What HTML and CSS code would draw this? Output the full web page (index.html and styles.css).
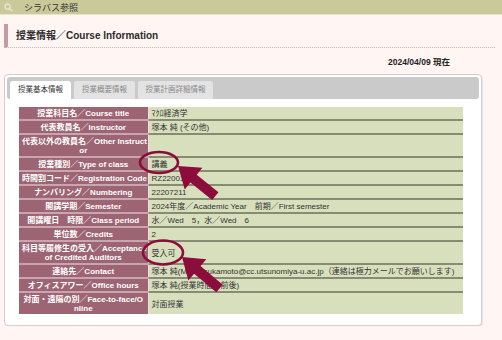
FILE: index.html
```html
<!DOCTYPE html>
<html lang="ja">
<head>
<meta charset="UTF-8">
<meta name="viewport" content="width=device-width, initial-scale=1.0">
<title>シラバス参照</title>
<link rel="stylesheet" href="styles.css">
</head>
<body>
    <div class="topbar">
        <svg class="search-icon" width="9" height="9" viewBox="0 0 9 9">
            <circle cx="3.6" cy="3.6" r="2.6" fill="none" stroke="#e6e6da" stroke-width="1.3"/>
            <line x1="5.5" y1="5.5" x2="8.3" y2="8.3" stroke="#e6e6da" stroke-width="1.6"/>
        </svg>
        <span>シラバス参照</span>
    </div>

    <h2 class="section-title">授業情報／Course Information</h2>
    <div class="as-of">2024/04/09 現在</div>

    <div class="panel">
        <ul class="tabs">
            <li class="tab active">授業基本情報</li>
            <li class="tab">授業概要情報</li>
            <li class="tab wide">授業計画詳細情報</li>
        </ul>
        <table class="info">
            <colgroup><col class="col-head"><col></colgroup>
            <tr><th>授業科目名／Course title</th><td>ﾏｸﾛ経済学</td></tr>
            <tr><th>代表教員名／Instructor</th><td>塚本 純 (その他)</td></tr>
            <tr><th>代表以外の教員名／Other Instruct<br>or</th><td></td></tr>
            <tr><th>授業種別／Type of class</th><td>講義</td></tr>
            <tr><th>時間割コード／Registration Code</th><td>RZ220031</td></tr>
            <tr><th>ナンバリング／Numbering</th><td>22207211</td></tr>
            <tr><th>開講学期／Semester</th><td>2024年度／Academic Year　前期／First semester</td></tr>
            <tr><th>開講曜日　時限／Class period</th><td>水／Wed　5，水／Wed　6</td></tr>
            <tr><th>単位数／Credits</th><td>2</td></tr>
            <tr><th>科目等履修生の受入／Acceptance<br>of Credited Auditors</th><td>受入可</td></tr>
            <tr><th>連絡先／Contact</th><td>塚本 純(Mail: jtsukamoto@cc.utsunomiya-u.ac.jp（連絡は極力メールでお願いします)</td></tr>
            <tr><th>オフィスアワー／Office hours</th><td>塚本 純(授業時間の前後)</td></tr>
            <tr><th>対面・遠隔の別／Face-to-face/O<br>nline</th><td>対面授業</td></tr>
        </table>
    </div>

    <!-- annotation marks drawn over the page -->
    <svg class="marks" width="502" height="340" viewBox="0 0 502 340">
        <ellipse cx="159" cy="162.5" rx="19" ry="10.5" fill="none" stroke="#8c0c3c" stroke-width="2.6"/>
        <polygon points="0,0 20,-14 20,-5 48,-5 48,5 20,5 20,14" fill="#8c0c3c" transform="translate(178 166) rotate(39)"/>
        <ellipse cx="163" cy="252.5" rx="20" ry="12" fill="none" stroke="#8c0c3c" stroke-width="2.6"/>
        <polygon points="0,0 20,-14 20,-5 49,-5 49,5 20,5 20,14" fill="#8c0c3c" transform="translate(182 257) rotate(40)"/>
    </svg>
</body>
</html>
```

FILE: styles.css
```css
body {
    margin: 0;
    background-color: #fff5f3;
    font-family: "Liberation Sans", "Noto Sans CJK JP", sans-serif;
    color: #333;
    position: relative;
}

.topbar {
    display: flex;
    align-items: center;
    height: 14px;
    background-color: #c9c99a;
    border-bottom: 1px solid #e6e6c8;
    font-size: 9px;
    color: #333;
}

.search-icon {
    margin: 0 11px 0 4px;
}

.section-title {
    margin: 9px 7px 0 4px;
    padding-left: 8px;
    height: 23px;
    line-height: 23px;
    font-size: 10px;
    font-weight: bold;
    color: #2c2c2c;
    border-left: 4px solid #c49aa8;
    border-bottom: 1px dotted #bdbdbd;
}

.as-of {
    margin-top: 9px;
    padding-right: 52px;
    text-align: right;
    font-size: 8.5px;
    line-height: 10px;
    font-weight: bold;
    color: #222;
}

.panel {
    margin: 7px 20px 0 4px;
    padding: 2px 2px 11px;
    background: #fff;
    border: 1px solid #cfcfcf;
    border-radius: 4px;
    box-shadow: 1px 1px 1px rgba(0, 0, 0, 0.08);
}

.tabs {
    display: flex;
    gap: 3px;
    margin: 0;
    padding: 4px 3px 0;
    height: 18px;
    list-style: none;
    background-color: #cacaca;
    border-radius: 3px;
}

.tab {
    width: 61px;
    height: 18px;
    line-height: 18px;
    text-align: center;
    font-size: 7.5px;
    color: #8a8a8a;
    background-color: #e3e3e3;
    border-radius: 3px 3px 0 0;
}

.tab.active {
    height: 19px;
    color: #333;
    background-color: #fff;
}

.tab.wide {
    width: 75px;
}

.info {
    margin: 8px 0 0 12px;
    width: 444px;
    table-layout: fixed;
    border-collapse: collapse;
    font-size: 8px;
    line-height: 9px;
}

.col-head {
    width: 129px;
}

.info th, .info td {
    padding: 2px 3px 1px;
    overflow: hidden;
}

.info th {
    white-space: nowrap;
    font-weight: bold;
    color: #fff;
    text-align: center;
    background-color: #9d6574;
    border-bottom: 2px solid #c9a5af;
    border-right: 1px solid #eadfe2;
}

.info td {
    text-align: left;
    color: #333;
    background-color: #d8dfbd;
    border-bottom: 2px solid #878b74;
    white-space: nowrap;
}

.info tr:last-child th, .info tr:last-child td {
    border-bottom: none;
}

.marks {
    position: absolute;
    top: 0;
    left: 0;
    pointer-events: none;
}
```
